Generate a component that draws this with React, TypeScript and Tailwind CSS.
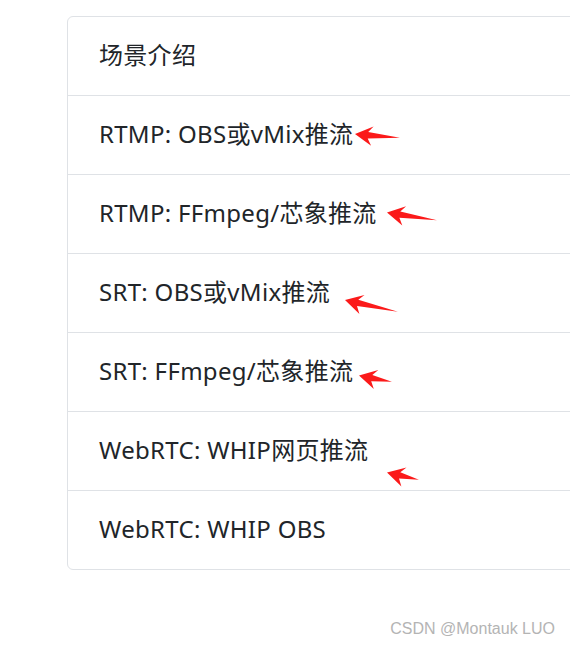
const items = [
  "场景介绍",
  "RTMP: OBS或vMix推流",
  "RTMP: FFmpeg/芯象推流",
  "SRT: OBS或vMix推流",
  "SRT: FFmpeg/芯象推流",
  "WebRTC: WHIP网页推流",
  "WebRTC: WHIP OBS",
];

// tip -> tail, in page pixels
const arrows = [
  { tip: [355, 134], tail: [400, 137.5] },
  { tip: [387, 212.5], tail: [437, 220] },
  { tip: [345, 300], tail: [398, 311.5] },
  { tip: [359, 375.5], tail: [392, 381.5] },
  { tip: [387, 472.5], tail: [419, 479.5] },
];

function arrowPoints(tip: number[], tail: number[]) {
  const dx = tail[0] - tip[0];
  const dy = tail[1] - tip[1];
  const len = Math.hypot(dx, dy);
  const ux = dx / len;
  const uy = dy / len;
  const nx = -uy;
  const ny = ux;
  const pt = (a: number, b: number) =>
    `${(tip[0] + ux * a + nx * b).toFixed(1)},${(tip[1] + uy * a + ny * b).toFixed(1)}`;
  return [
    pt(0, 0),
    pt(18, -9),
    pt(13, -3),
    pt(len, 0.3),
    pt(13, 3.4),
    pt(17, 10.5),
  ].join(" ");
}

export default function App() {
  return (
    <div className="relative w-[570px] h-[645px] overflow-hidden bg-white font-['Noto_Sans','Noto_Sans_CJK_SC',sans-serif]">
      <div className="pt-[16px] pl-[67px]">
        <ul className="w-[540px] rounded-[6px] border border-[#dfe2e6] bg-white">
          {items.map((t, i) => (
            <li
              key={i}
              className={`flex items-center pb-[2px] pl-[31px] text-[24px] tracking-[0.3px] text-[#212529] ${
                i > 0 ? "h-[79px] border-t border-[#dfe2e6]" : "h-[78px]"
              }`}
            >
              {t}
            </li>
          ))}
        </ul>
      </div>

      <svg className="pointer-events-none absolute inset-0" width="570" height="645">
        {arrows.map((a, i) => (
          <polygon key={i} points={arrowPoints(a.tip, a.tail)} fill="#fb1a1a" />
        ))}
      </svg>

      <div className="absolute right-[15px] top-[617px] font-['Liberation_Sans',Arial,sans-serif] text-[16px] text-[#b4b4b4]">
        CSDN @Montauk LUO
      </div>
    </div>
  );
}
